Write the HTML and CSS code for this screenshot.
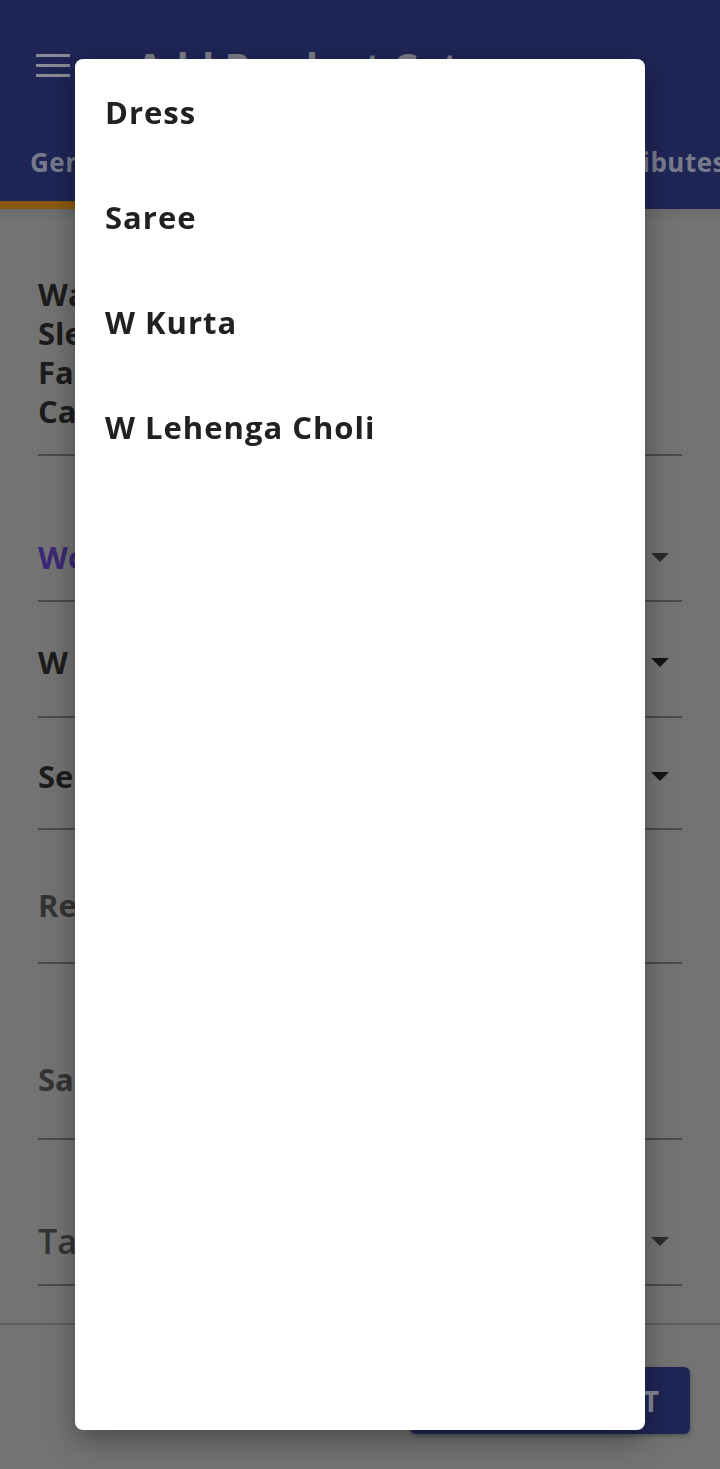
FILE: index.html
```html
<!DOCTYPE html>
<html lang="en">
<head>
<meta charset="utf-8">
<title>Add Product Category</title>
<link rel="stylesheet" href="styles.css">
</head>
<body>
<div class="app">
  <header class="appbar">
    <div class="toolbar">
      <svg class="menu-icon" width="34" height="24" viewBox="0 0 34 24" aria-hidden="true">
        <rect x="0" y="0" width="34" height="3" fill="currentColor"/>
        <rect x="0" y="10" width="34" height="3" fill="currentColor"/>
        <rect x="0" y="20" width="34" height="3" fill="currentColor"/>
      </svg>
      <h1 class="title">Add Product Category</h1>
    </div>
    <nav class="tabs">
      <div class="tab tab-active">General</div>
      <div class="tab">Attributes</div>
    </nav>
    <div class="tab-indicator"></div>
  </header>

  <main class="form">
    <div class="field field-multi">
      <div class="value">Waist Type, Neck Type,<br>Sleeve Length, Pattern,<br>Fabric, Occasion,<br>Care Instructions</div>
    </div>
    <div class="field field-select field-first">
      <div class="value value-accent">Women</div>
      <span class="caret caret-soft"></span>
    </div>
    <div class="field field-select field-next">
      <div class="value">W Ethnic Wear</div>
      <span class="caret"></span>
    </div>
    <div class="field field-select field-next field-short">
      <div class="value">Select Size Chart</div>
      <span class="caret"></span>
    </div>
    <div class="field field-hint">
      <div class="value value-hint">Return Period</div>
    </div>
    <div class="field field-hint field-tall">
      <div class="value value-hint">Sales Commission</div>
    </div>
    <div class="field field-select field-last">
      <div class="value value-hint value-regular">Tax Slab</div>
      <span class="caret caret-soft"></span>
    </div>
  </main>

  <footer class="bottombar">
    <button class="submit">SUBMIT</button>
  </footer>
</div>

<div class="menu" role="listbox">
  <div class="menu-item" role="option">Dress</div>
  <div class="menu-item" role="option">Saree</div>
  <div class="menu-item" role="option">W Kurta</div>
  <div class="menu-item" role="option">W Lehenga Choli</div>
</div>
</body>
</html>
```
FILE: styles.css
```css
* { box-sizing: border-box; }
html, body { margin: 0; padding: 0; }
body {
  width: 720px;
  height: 1469px;
  overflow: hidden;
  background: #737373;
  font-family: "Open Sans", "DejaVu Sans", sans-serif;
  color: #1e1e1e;
}
.app {
  display: flex;
  flex-direction: column;
  height: 1469px;
}
.appbar {
  position: relative;
  background: #1f2555;
  height: 209px;
  overflow: hidden;
  flex: none;
}
.toolbar {
  display: flex;
  align-items: center;
  height: 132px;
  padding-left: 36px;
  gap: 66px;
}
.menu-icon { color: #8a8a92; flex: none; }
.title {
  margin: 0;
  font-size: 40px;
  font-weight: 700;
  color: #7a7b86;
  white-space: nowrap;
}
.tabs {
  display: flex;
  justify-content: space-between;
  padding-left: 30px;
  margin-right: -6px;
  height: 60px;
  align-items: center;
}
.tab {
  font-size: 26px;
  font-weight: 700;
  letter-spacing: 0.5px;
  color: #777a8c;
}
.tab-indicator {
  position: absolute;
  left: 0;
  bottom: 0;
  width: 250px;
  height: 8px;
  background: #8a5a0c;
}
.form {
  flex: 1;
  display: flex;
  flex-direction: column;
  padding: 0 38px;
  background: linear-gradient(#6c6c6c, #737373 14px);
}
.field {
  display: flex;
  align-items: center;
  border-bottom: 2px solid #4a4a4a;
}
.field-multi { padding: 66px 0 23px; }
.field-first { height: 146px; padding-top: 58px; }
.field-next { height: 116px; padding-top: 6px; }
.field-short { height: 112px; }
.field-hint { height: 134px; padding-top: 18px; }
.field-tall { height: 176px; padding-top: 56px; }
.field-last { height: 146px; padding-top: 58px; }
.value {
  flex: 1;
  font-size: 31px;
  font-weight: 700;
  line-height: 39px;
  color: #1c1c1c;
  white-space: nowrap;
}
.value-accent { color: #3a2876; }
.value-hint { color: #343434; }
.value-regular { font-weight: 600; font-size: 34px; }
.caret {
  width: 0;
  height: 0;
  margin-right: 13px;
  border-left: 9px solid transparent;
  border-right: 9px solid transparent;
  border-top: 9px solid #141414;
}
.caret-soft { border-top-color: #2a2a2a; }
.bottombar {
  flex: none;
  height: 146px;
  border-top: 2px solid #5e5e5e;
  display: flex;
  justify-content: flex-end;
  align-items: flex-start;
  padding: 42px 30px 0 0;
}
.submit {
  width: 280px;
  height: 67px;
  border: none;
  border-radius: 6px;
  background: #1f2555;
  color: #8a8a98;
  font-family: inherit;
  font-size: 28px;
  font-weight: 700;
  letter-spacing: 1px;
  display: flex;
  justify-content: flex-end;
  align-items: center;
  padding-right: 30px;
  box-shadow: 0 2px 4px rgba(0,0,0,0.3);
}
.menu {
  position: fixed;
  left: 75px;
  top: 59px;
  width: 570px;
  height: 1371px;
  background: #ffffff;
  border-radius: 8px;
  box-shadow: 0 10px 28px rgba(0,0,0,0.35);
  display: flex;
  flex-direction: column;
}
.menu-item {
  height: 105px;
  display: flex;
  align-items: center;
  padding-left: 30px;
  font-size: 31px;
  font-weight: 700;
  letter-spacing: 1px;
  color: #212121;
}
```
